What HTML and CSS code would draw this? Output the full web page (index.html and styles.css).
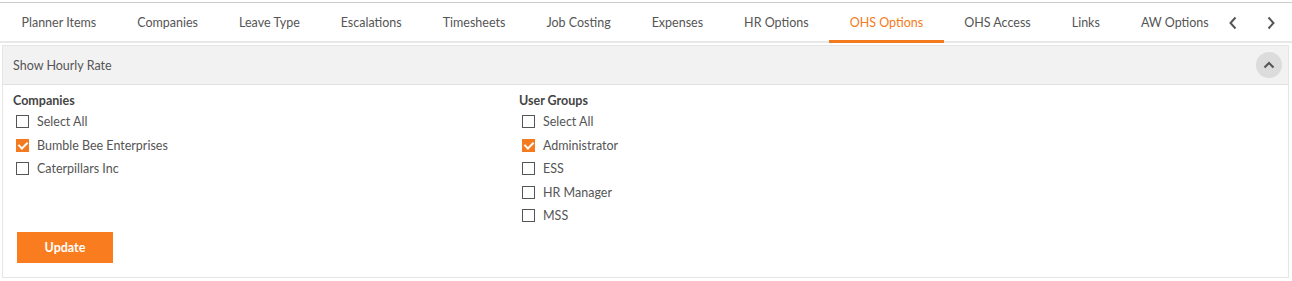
FILE: index.html
```
<!DOCTYPE html>
<html lang="en">
<head>
    <meta charset="UTF-8">
    <title>OHS Options</title>
    <link rel="stylesheet" href="styles.css">
</head>
<body>

<div class="tabs">
    <ul class="tab-list">
        <li class="tab">Planner Items</li>
        <li class="tab">Companies</li>
        <li class="tab">Leave Type</li>
        <li class="tab">Escalations</li>
        <li class="tab">Timesheets</li>
        <li class="tab">Job Costing</li>
        <li class="tab">Expenses</li>
        <li class="tab">HR Options</li>
        <li class="tab active">OHS Options</li>
        <li class="tab">OHS Access</li>
        <li class="tab">Links</li>
        <li class="tab">AW Options</li>
    </ul>
    <div class="tab-nav">
        <span class="nav-arrow">
            <svg width="10" height="14" viewBox="0 0 10 14"><path d="M7.5 1.5 L2.5 7 L7.5 12.5" fill="none" stroke="#555" stroke-width="2"/></svg>
        </span>
        <span class="nav-arrow">
            <svg width="10" height="14" viewBox="0 0 10 14"><path d="M2.5 1.5 L7.5 7 L2.5 12.5" fill="none" stroke="#555" stroke-width="2"/></svg>
        </span>
    </div>
</div>

<div class="panel">
    <div class="panel-header">
        <span>Show Hourly Rate</span>
        <button class="collapse-btn" type="button">
            <svg width="12" height="8" viewBox="0 0 12 8"><path d="M1.5 6.5 L6 2 L10.5 6.5" fill="none" stroke="#555" stroke-width="2"/></svg>
        </button>
    </div>
    <div class="panel-body">
        <div class="columns">
            <div class="group">
                <div class="group-title">Companies</div>
                <label class="check"><span class="box"></span>Select All</label>
                <label class="check"><span class="box checked"></span>Bumble Bee Enterprises</label>
                <label class="check"><span class="box"></span>Caterpillars Inc</label>
            </div>
            <div class="group">
                <div class="group-title">User Groups</div>
                <label class="check"><span class="box"></span>Select All</label>
                <label class="check"><span class="box checked"></span>Administrator</label>
                <label class="check"><span class="box"></span>ESS</label>
                <label class="check"><span class="box"></span>HR Manager</label>
                <label class="check"><span class="box"></span>MSS</label>
            </div>
        </div>
        <button class="update-btn" type="button">Update</button>
    </div>
</div>

</body>
</html>
```

FILE: styles.css
```
body {
    font-family: 'Lato', 'Open Sans', Arial, sans-serif;
    font-size: 12.5px;
    color: #555;
    background-color: white;
    margin: 0;
    padding: 0;
}

/* Tab bar */
.tabs {
    display: flex;
    align-items: stretch;
    margin-top: 2px;
    border-top: 1px solid #ccc;
    border-bottom: 2px solid #e8e8e8;
    height: 38px;
}
.tab-list {
    display: flex;
    list-style: none;
    margin: 0;
    padding: 0 0 0 1px;
    flex: 1;
    min-width: 0;
}
.tab {
    padding: 0 20.5px;
    line-height: 39px;
    white-space: nowrap;
    color: #555;
    border-bottom: 3px solid transparent;
    margin-bottom: -2px;
}
.tab.active {
    color: #f47a20;
    border-bottom-color: #f47a20;
}
.tab-nav {
    display: flex;
    align-items: center;
    gap: 28px;
    padding-right: 16px;
    padding-top: 2px;
}
.nav-arrow {
    display: flex;
}

/* Panel */
.panel {
    margin: 2px 3px 0 2px;
    border: 1px solid #e6e6e6;
}
.panel-header {
    display: flex;
    justify-content: space-between;
    align-items: center;
    height: 38px;
    padding: 0 6px 0 10px;
    background-color: #f2f2f2;
    border-bottom: 1px solid #e0e0e0;
}
.collapse-btn {
    width: 26px;
    height: 26px;
    border: none;
    border-radius: 50%;
    background-color: #dcdcdc;
    display: flex;
    align-items: center;
    justify-content: center;
    padding: 0;
}
.panel-body {
    padding: 7px 10px 14px 10px;
}
.columns {
    display: grid;
    grid-template-columns: 506px 1fr;
}
.group-title {
    font-weight: bold;
    color: #444;
    line-height: 18px;
}
.check {
    display: flex;
    align-items: center;
    height: 23.5px;
    padding-left: 3px;
}
.box {
    width: 11px;
    height: 11px;
    border: 1px solid #555;
    margin-right: 8px;
    position: relative;
}
.box.checked {
    background-color: #f47a20;
    border-color: #f47a20;
}
.box.checked:after {
    content: "";
    position: absolute;
    left: 3px;
    top: 0px;
    width: 4px;
    height: 7px;
    border: solid white;
    border-width: 0 2px 2px 0;
    transform: rotate(45deg);
}
.update-btn {
    margin: 4px 0 0 4px;
    width: 96px;
    height: 31px;
    border: none;
    background-color: #f97d1f;
    color: white;
    font-family: inherit;
    font-size: 12.5px;
    font-weight: bold;
}
```
